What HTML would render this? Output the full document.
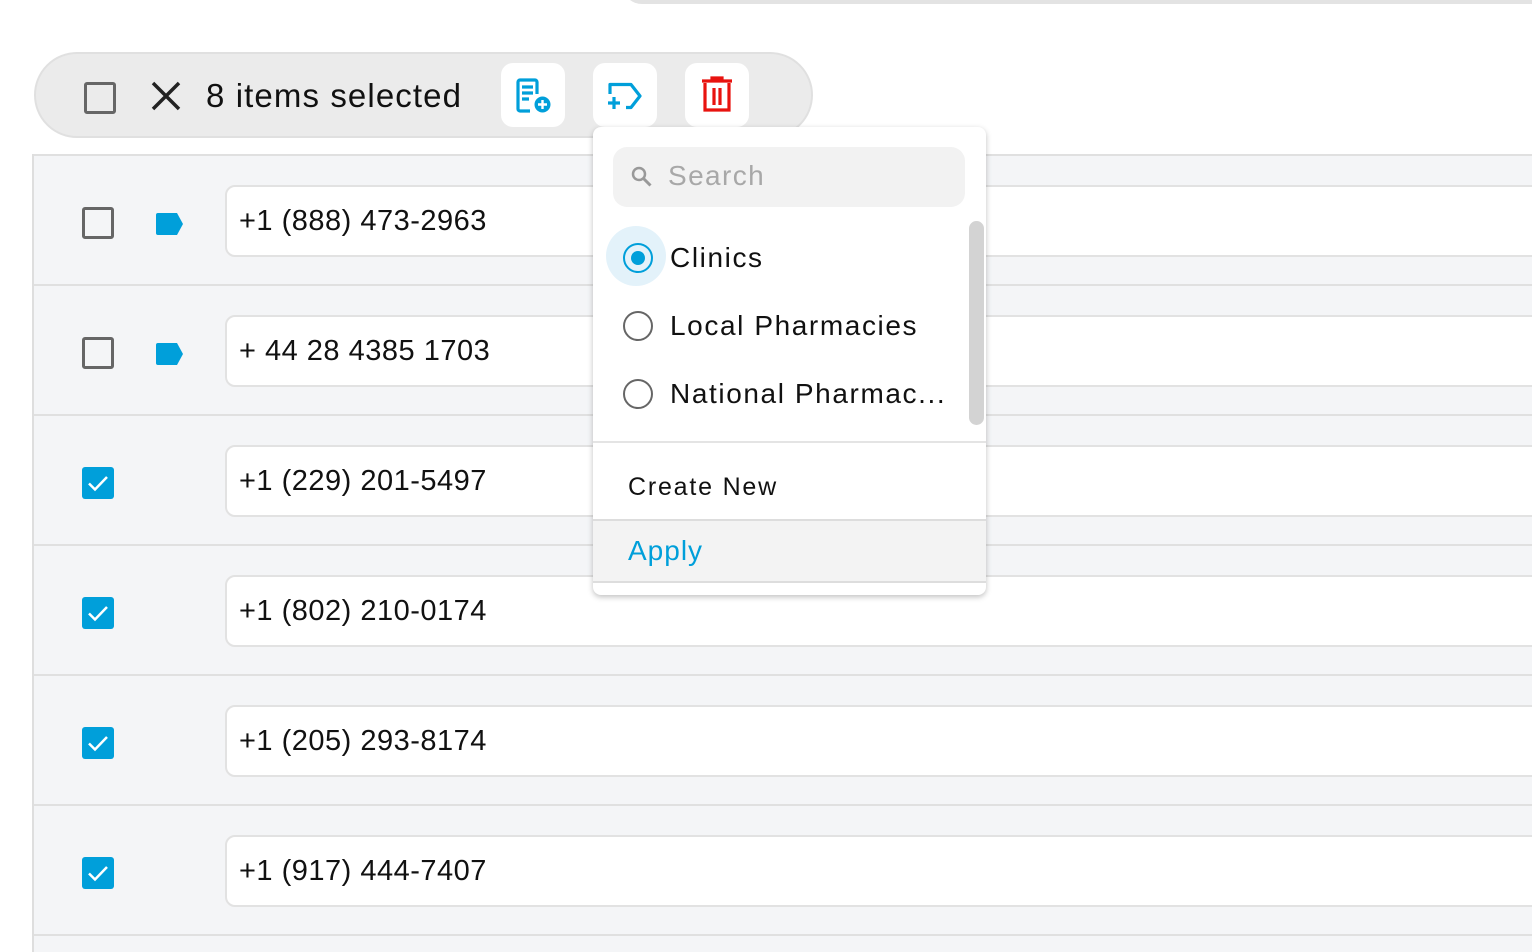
<!DOCTYPE html>
<html><head><style>
*{box-sizing:border-box;margin:0;padding:0}
html,body{width:1532px;height:952px;overflow:hidden}
body{background:#fff;font-family:"Liberation Sans",sans-serif;position:relative;color:#111}
.topband{position:absolute;left:622px;top:-20px;width:910px;height:24px;background:#e3e3e3;border-radius:0 0 0 20px}
.bar{position:absolute;left:34px;top:52px;width:779px;height:86px;background:#ebebeb;border:2px solid #e0e0e0;border-radius:43px}
.cb{position:absolute;width:32px;height:32px;border:3px solid #666;border-radius:3px}
.cbc{position:absolute;width:32px;height:32px;background:#009fda;border-radius:3px}
.btn{position:absolute;top:63px;width:64px;height:64px;background:#fff;border-radius:12px}
.table{position:absolute;left:32px;top:154px;width:1500px;height:798px;border-left:2px solid #dedede;background:#f4f5f7;overflow:hidden}
.row{position:absolute;left:0;width:1500px;height:130px;border-top:2px solid #e0e0e0}
.inp{position:absolute;left:191px;top:29px;width:1320px;height:72px;background:#fff;border:2px solid #e2e2e2;border-radius:10px;font-size:29px;line-height:68px;padding-left:12px;letter-spacing:0.5px}
.tag{position:absolute;left:121px;top:56px}
.dd{position:absolute;left:593px;top:127px;width:393px;height:468px;background:#fff;border-radius:8px;box-shadow:0 2px 6px rgba(0,0,0,.25)}
.rad{position:absolute;width:30px;height:30px;border:2px solid #666;border-radius:50%}
.opt{position:absolute;left:77px;font-size:28px;letter-spacing:1.6px}
</style></head><body>
<div class="topband"></div>
<div class="bar"></div>
<div class="cb" style="left:84px;top:82px"></div>
<svg style="position:absolute;left:150px;top:80px" width="32" height="32" viewBox="0 0 32 32"><path d="M3 3L29 29M29 3L3 29" stroke="#222" stroke-width="3.5"/></svg>
<div style="position:absolute;left:206px;top:77px;font-size:33px;letter-spacing:1.1px;color:#111">8 items selected</div>
<div class="btn" style="left:501px"><svg width="64" height="64" viewBox="0 0 64 64"><path d="M29 48H19a2 2 0 0 1-2-2V19a2 2 0 0 1 2-2h15a2 2 0 0 1 2 2v12" fill="none" stroke="#009fda" stroke-width="3.2"/><path d="M21 24h11M21 30h11M21 36h7" stroke="#009fda" stroke-width="3.2"/><circle cx="41.5" cy="41.5" r="8" fill="#009fda"/><path d="M41.5 37v9M37 41.5h9" stroke="#fff" stroke-width="2.4"/></svg></div>
<div class="btn" style="left:593px"><svg width="64" height="64" viewBox="0 0 64 64"><path d="M17 31V21.5h21l9 11.5-9 11.5h-5" fill="none" stroke="#009fda" stroke-width="3.2" stroke-linejoin="round"/><path d="M15 40h12M21 34v12" stroke="#009fda" stroke-width="3.2"/></svg></div>
<div class="btn" style="left:685px"><svg width="64" height="64" viewBox="0 0 64 64"><path d="M17 18h30M27 18v-3h10v3" fill="none" stroke="#e8130f" stroke-width="3.2"/><path d="M20 20v27h24V20" fill="none" stroke="#e8130f" stroke-width="3.2"/><path d="M29 25v17M35 25v17" stroke="#e8130f" stroke-width="3.2"/></svg></div>

<div class="table">
<div class="row" style="top:0"><div class="cb" style="left:48px;top:51px"></div><svg class="tag" width="30" height="24" viewBox="0 0 30 24"><path d="M3 1h19l6 11-6 11H3a2 2 0 0 1-2-2V3a2 2 0 0 1 2-2z" fill="#009fda"/></svg><div class="inp">+1 (888) 473-2963</div></div>
<div class="row" style="top:130px"><div class="cb" style="left:48px;top:51px"></div><svg class="tag" width="30" height="24" viewBox="0 0 30 24"><path d="M3 1h19l6 11-6 11H3a2 2 0 0 1-2-2V3a2 2 0 0 1 2-2z" fill="#009fda"/></svg><div class="inp">+ 44 28 4385 1703</div></div>
<div class="row" style="top:260px"><div class="cbc" style="left:48px;top:51px"><svg width="32" height="32"><path d="M7 16.5l6 6L25 10" fill="none" stroke="#fff" stroke-width="2.5"/></svg></div><div class="inp">+1 (229) 201-5497</div></div>
<div class="row" style="top:390px"><div class="cbc" style="left:48px;top:51px"><svg width="32" height="32"><path d="M7 16.5l6 6L25 10" fill="none" stroke="#fff" stroke-width="2.5"/></svg></div><div class="inp">+1 (802) 210-0174</div></div>
<div class="row" style="top:520px"><div class="cbc" style="left:48px;top:51px"><svg width="32" height="32"><path d="M7 16.5l6 6L25 10" fill="none" stroke="#fff" stroke-width="2.5"/></svg></div><div class="inp">+1 (205) 293-8174</div></div>
<div class="row" style="top:650px"><div class="cbc" style="left:48px;top:51px"><svg width="32" height="32"><path d="M7 16.5l6 6L25 10" fill="none" stroke="#fff" stroke-width="2.5"/></svg></div><div class="inp">+1 (917) 444-7407</div></div>
<div class="row" style="top:780px;height:18px"></div>
</div>

<div class="dd">
<div style="position:absolute;left:20px;top:20px;width:352px;height:60px;background:#f2f2f2;border-radius:14px"></div>
<svg style="position:absolute;left:37px;top:38px" width="24" height="24" viewBox="0 0 24 24"><circle cx="9" cy="9" r="6" fill="none" stroke="#999" stroke-width="2.5"/><path d="M13.5 13.5l7 7" stroke="#999" stroke-width="3"/></svg>
<div style="position:absolute;left:75px;top:33px;font-size:28px;color:#a8a8a8;letter-spacing:1.4px">Search</div>
<div style="position:absolute;left:376px;top:94px;width:15px;height:204px;background:#d3d3d3;border-radius:8px"></div>
<div style="position:absolute;left:13px;top:99px;width:60px;height:60px;border-radius:50%;background:#e3f2fa"></div>
<div class="rad" style="left:30px;top:116px;border-color:#009fda"><div style="position:absolute;left:6px;top:6px;width:14px;height:14px;border-radius:50%;background:#009fda"></div></div>
<div class="opt" style="top:115px">Clinics</div>
<div class="rad" style="left:30px;top:184px"></div>
<div class="opt" style="top:183px">Local Pharmacies</div>
<div class="rad" style="left:30px;top:252px"></div>
<div class="opt" style="top:251px">National Pharmac...</div>
<div style="position:absolute;left:0;top:314px;width:393px;height:2px;background:#e4e4e4"></div>
<div style="position:absolute;left:35px;top:346px;font-size:25px;letter-spacing:1.8px">Create New</div>
<div style="position:absolute;left:0;top:392px;width:393px;height:64px;background:#f3f3f3;border-top:2px solid #ddd;border-bottom:2px solid #ddd"></div>
<div style="position:absolute;left:35px;top:408px;font-size:28px;color:#009fda;letter-spacing:1px">Apply</div>
</div>
</body></html>
